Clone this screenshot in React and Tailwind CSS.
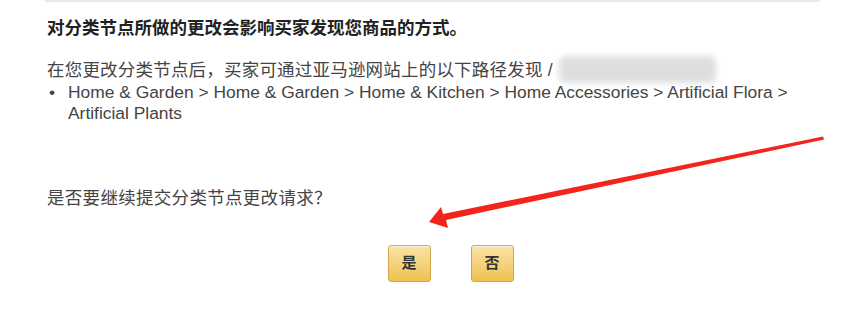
const font = { fontFamily: '"Liberation Sans", "Noto Sans CJK SC", Arial, sans-serif' };

function YellowButton({ children }) {
  return (
    <button
      type="button"
      className="w-[43px] h-[37px] rounded-[3px] border border-[#cfa84c] bg-gradient-to-b from-[#f9e3a6] to-[#efc14e] text-[15px] font-bold text-[#333] shadow-[0_1px_0_rgba(255,255,255,0.6)_inset]"
    >
      {children}
    </button>
  );
}

function Arrow() {
  return (
    <svg
      className="absolute left-0 top-0 pointer-events-none"
      width="850"
      height="319"
      viewBox="0 0 850 319"
    >
      <path
        d="M823 136.5 L824 139.5 L446 220 L448 228 L429 222 L441 207 L443 214 Z"
        fill="#f2241c"
      />
    </svg>
  );
}

export default function App() {
  return (
    <div className="relative w-[850px] h-[319px] bg-white overflow-hidden text-[#333]" style={font}>
      <div className="ml-[45px] w-[775px] h-[2px] bg-[#e9e9e9]" />

      <div className="pl-[47px]">
        <h2 className="mt-[14px] text-[17.5px] leading-[24px] font-bold text-[#222]">
          对分类节点所做的更改会影响买家发现您商品的方式。
        </h2>

        <p className="mt-[20px] h-[21px] text-[17.5px] leading-[21px] text-[#444] tracking-[0.2px]">
          在您更改分类节点后，买家可通过亚马逊网站上的以下路径发现 /
          <span className="inline-block align-middle ml-[6px] -mt-[4px] w-[157px] h-[27px] rounded-[6px] bg-[#dedede] blur-[3px]" />
        </p>

        <ul className="mt-[1px] w-[770px] text-[17.4px] leading-[21px] text-[#444]">
          <li className="flex">
            <span className="w-[21px] shrink-0 pl-[2px]">•</span>
            <span className="w-[735px]">
              Home &amp; Garden &gt; Home &amp; Garden &gt; Home &amp; Kitchen &gt; Home Accessories &gt; Artificial Flora &gt; Artificial Plants
            </span>
          </li>
        </ul>

        <p className="mt-[64px] h-[21px] text-[17.5px] leading-[21px] text-[#444] tracking-[0.3px]">
          是否要继续提交分类节点更改请求？
        </p>
      </div>

      <div className="mt-[36px] flex justify-center gap-[40px] pl-[51px]">
        <YellowButton>是</YellowButton>
        <YellowButton>否</YellowButton>
      </div>

      <Arrow />
    </div>
  );
}
